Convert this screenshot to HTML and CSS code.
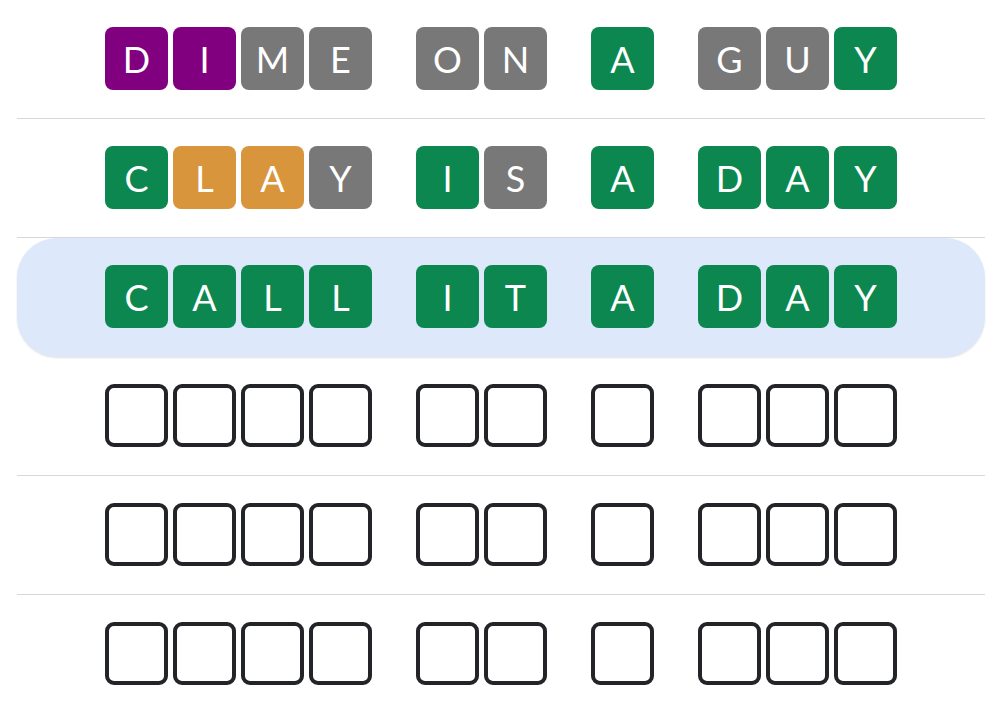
FILE: index.html
```html
<!DOCTYPE html>
<html lang="en">
<head>
  <meta charset="UTF-8">
  <meta name="viewport" content="width=device-width, initial-scale=1.0">
  <title>Phrase Guess Board</title>
  <link rel="stylesheet" href="styles.css">
</head>
<body>
  <div class="board">
    <div class="row">
      <div class="word"><div class="tile purple">D</div><div class="tile purple">I</div><div class="tile gray">M</div><div class="tile gray">E</div></div>
      <div class="word"><div class="tile gray">O</div><div class="tile gray">N</div></div>
      <div class="word"><div class="tile green">A</div></div>
      <div class="word"><div class="tile gray">G</div><div class="tile gray">U</div><div class="tile green">Y</div></div>
    </div>

    <div class="row">
      <div class="word"><div class="tile green">C</div><div class="tile orange">L</div><div class="tile orange">A</div><div class="tile gray">Y</div></div>
      <div class="word"><div class="tile green">I</div><div class="tile gray">S</div></div>
      <div class="word"><div class="tile green">A</div></div>
      <div class="word"><div class="tile green">D</div><div class="tile green">A</div><div class="tile green">Y</div></div>
    </div>

    <div class="row current">
      <div class="word"><div class="tile green">C</div><div class="tile green">A</div><div class="tile green">L</div><div class="tile green">L</div></div>
      <div class="word"><div class="tile green">I</div><div class="tile green">T</div></div>
      <div class="word"><div class="tile green">A</div></div>
      <div class="word"><div class="tile green">D</div><div class="tile green">A</div><div class="tile green">Y</div></div>
    </div>

    <div class="row">
      <div class="word"><div class="tile empty"></div><div class="tile empty"></div><div class="tile empty"></div><div class="tile empty"></div></div>
      <div class="word"><div class="tile empty"></div><div class="tile empty"></div></div>
      <div class="word"><div class="tile empty"></div></div>
      <div class="word"><div class="tile empty"></div><div class="tile empty"></div><div class="tile empty"></div></div>
    </div>

    <div class="row">
      <div class="word"><div class="tile empty"></div><div class="tile empty"></div><div class="tile empty"></div><div class="tile empty"></div></div>
      <div class="word"><div class="tile empty"></div><div class="tile empty"></div></div>
      <div class="word"><div class="tile empty"></div></div>
      <div class="word"><div class="tile empty"></div><div class="tile empty"></div><div class="tile empty"></div></div>
    </div>

    <div class="row last">
      <div class="word"><div class="tile empty"></div><div class="tile empty"></div><div class="tile empty"></div><div class="tile empty"></div></div>
      <div class="word"><div class="tile empty"></div><div class="tile empty"></div></div>
      <div class="word"><div class="tile empty"></div></div>
      <div class="word"><div class="tile empty"></div><div class="tile empty"></div><div class="tile empty"></div></div>
    </div>
  </div>
</body>
</html>
```

FILE: styles.css
```css
body {
  font-family: Lato, "Liberation Sans", sans-serif;
  margin: 0;
  padding: 0;
  background: white;
}
.board {
  margin: 0 15px 0 17px;
}
.row {
  display: flex;
  justify-content: center;
  gap: 44px;
  padding: 27px 0 28px;
  border-bottom: 1px solid #d8d8d8;
}
.row.current {
  background-color: #dde9fb;
  border-radius: 40px;
  border-bottom-color: transparent;
  box-shadow: 0 1px 2px rgba(0,0,0,0.12);
}
.row.last {
  border-bottom: none;
}
.word {
  display: flex;
  gap: 5px;
}
.tile {
  width: 63px;
  height: 63px;
  box-sizing: border-box;
  border-radius: 8px;
  display: flex;
  align-items: center;
  justify-content: center;
  color: white;
  font-size: 36px;
  font-weight: 400;
}
.purple { background-color: #800080; }
.gray { background-color: #787878; }
.green { background-color: #0b874f; }
.orange { background-color: #d8953c; }
.empty {
  border: 4px solid #222427;
  border-radius: 9px;
}
```
